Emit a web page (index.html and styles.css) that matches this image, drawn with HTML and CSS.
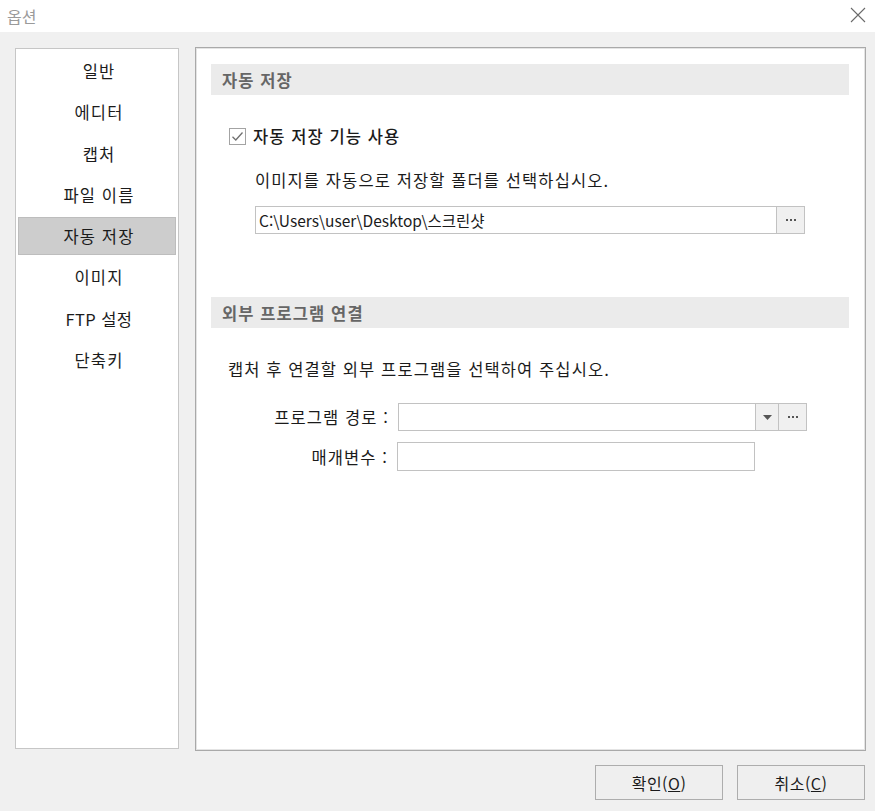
FILE: index.html
```html
<!DOCTYPE html>
<html lang="ko">
<head>
<meta charset="utf-8">
<title>옵션</title>
<link rel="stylesheet" href="styles.css">
</head>
<body>
<div class="dialog">
  <div class="titlebar">
    <span class="title">옵션</span>
    <svg class="close" width="16" height="16" viewBox="0 0 16 16"><path d="M1 1L15 15M15 1L1 15" stroke="#6a6a6a" stroke-width="1.1" fill="none"/></svg>
  </div>
  <div class="main">
    <nav class="nav">
      <div class="nav-item">일반</div>
      <div class="nav-item">에디터</div>
      <div class="nav-item">캡처</div>
      <div class="nav-item">파일 이름</div>
      <div class="nav-item selected">자동 저장</div>
      <div class="nav-item">이미지</div>
      <div class="nav-item latin">FTP 설정</div>
      <div class="nav-item">단축키</div>
    </nav>
    <section class="panel">
      <div class="section-header">자동 저장</div>
      <label class="check-row">
        <svg class="checkbox" width="17" height="17" viewBox="0 0 17 17"><rect x="0.5" y="0.5" width="16" height="16" fill="#fff" stroke="#a3a3a3"/><path d="M3.5 8.8L6.8 12L13.5 4.5" stroke="#707070" stroke-width="1.3" fill="none"/></svg>
        <span class="check-label">자동 저장 기능 사용</span>
      </label>
      <div class="desc desc1">이미지를 자동으로 저장할 폴더를 선택하십시오.</div>
      <div class="path-row">
        <div class="input path-input">C:\Users\user\Desktop\스크린샷</div>
        <div class="btn-small dots"><span></span><span></span><span></span></div>
      </div>
      <div class="section-header second">외부 프로그램 연결</div>
      <div class="desc desc2">캡처 후 연결할 외부 프로그램을 선택하여 주십시오.</div>
      <div class="form-row row1">
        <div class="form-label">프로그램 경로 :</div>
        <div class="input combo-input"></div>
        <div class="btn-small drop"><svg width="9" height="5" viewBox="0 0 9 5"><path d="M0 0H9L4.5 5Z" fill="#555"/></svg></div>
        <div class="btn-small dots"><span></span><span></span><span></span></div>
      </div>
      <div class="form-row row2">
        <div class="form-label">매개변수 :</div>
        <div class="input param-input"></div>
      </div>
    </section>
  </div>
  <div class="footer">
    <button class="btn">확인(<u>O</u>)</button>
    <button class="btn">취소(<u>C</u>)</button>
  </div>
</div>
</body>
</html>
```

FILE: styles.css
```css
* { box-sizing: border-box; }
html, body { margin: 0; padding: 0; }
body {
  width: 875px;
  height: 811px;
  background: #f0f0f0;
  font-family: "Noto Sans CJK KR", "Noto Sans", sans-serif;
  font-size: 16.5px;
  letter-spacing: 1.1px;
  color: #1b1b1b;
  overflow: hidden;
}
.dialog { width: 875px; height: 811px; display: flex; flex-direction: column; }
.titlebar {
  height: 32px;
  background: #fff;
  display: flex;
  align-items: center;
  justify-content: space-between;
  padding: 0 9px 0 7px;
}
.title { color: #9a9a9a; font-size: 16px; letter-spacing: 0; }
.close { display: block; margin-top: -2px; }
.main {
  display: flex;
  align-items: flex-start;
  gap: 16px;
  padding: 15px 9px 0 15px;
}
.nav {
  width: 164px;
  height: 701px;
  margin-top: 1px;
  background: #fff;
  border: 1px solid #c6c6c6;
  padding: 3px 2px;
  display: flex;
  flex-direction: column;
  gap: 3.25px;
}
.nav-item {
  height: 38px;
  display: flex;
  align-items: center;
  justify-content: center;
  border: 1px solid transparent;
  padding-left: 4px;
}
.nav-item.latin { letter-spacing: 0.4px; }
.nav-item.selected { background: #cdcdcd; border-color: #bdbdbd; }
.panel {
  flex: 1;
  height: 704px;
  background: #fff;
  border: 1px solid #a9a9a9;
  box-shadow: inset 0 0 0 1px #e4e4e4;
  padding: 16px 16px 0 15px;
}
.section-header {
  height: 31px;
  background: #ebebeb;
  color: #666;
  font-weight: 700;
  display: flex;
  align-items: center;
  padding-left: 11px;
}
.section-header.second { margin-top: 63px; }
.check-row {
  display: flex;
  align-items: center;
  height: 20px;
  margin-top: 31px;
  margin-left: 18px;
}
.checkbox { display: block; margin-right: 7px; }
.check-label { font-weight: 500; }
.desc { height: 20px; line-height: 20px; }
.desc1 { margin-top: 24px; margin-left: 44px; }
.desc2 { margin-top: 31px; margin-left: 17px; }
.path-row { display: flex; margin-top: 16px; margin-left: 44px; }
.input {
  height: 28px;
  background: #fff;
  border: 1px solid #c2c2c2;
  line-height: 26px;
  padding-left: 3px;
  letter-spacing: 0;
  font-size: 15.5px;
}
.path-input { width: 522px; }
.btn-small {
  height: 28px;
  background: #f0f0f0;
  border: 1px solid #c2c2c2;
  border-left: none;
  display: flex;
  align-items: center;
  justify-content: center;
}
.dots { width: 28px; gap: 2px; }
.dots span { width: 2px; height: 2px; background: #555; display: block; }
.drop { width: 23px; }
.form-row { display: flex; align-items: center; }
.row1 { margin-top: 24px; }
.row2 { margin-top: 11px; }
.form-label { width: 187px; text-align: right; padding-right: 9px; }
.combo-input { width: 358px; }
.row2 .form-label { width: 186px; }
.param-input { width: 358px; height: 29px; }
.footer {
  display: flex;
  justify-content: flex-end;
  gap: 14px;
  padding: 14px 10px 0 0;
}
.btn {
  width: 128px;
  height: 35px;
  background: #efefef;
  border: 1px solid #adadad;
  font-family: inherit;
  font-size: 16px;
  letter-spacing: 0.5px;
  color: #1b1b1b;
  padding: 0;
}
```
